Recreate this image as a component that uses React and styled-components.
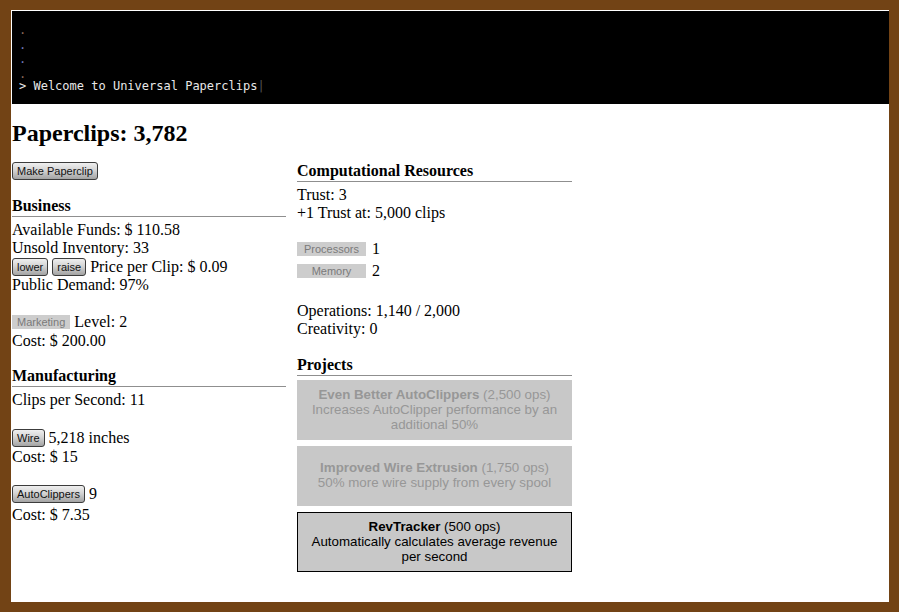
import styled, { createGlobalStyle } from 'styled-components';

const GlobalStyle = createGlobalStyle`
  html, body {
    margin: 0;
    padding: 0;
    background: #724315;
  }
  body {
    font-family: "Liberation Serif", "Times New Roman", serif;
    font-size: 16px;
    color: #000;
  }
`;

const Page = styled.div`
  padding: 10px 10px 10px 11px;
  height: 612px;
  box-sizing: border-box;
`;

const Panel = styled.div`
  background: #fff;
  width: 878px;
  height: 592px;
  box-sizing: border-box;
  padding-top: 1px;
`;

const Console = styled.div`
  margin-left: 1px;
  height: 93px;
  box-sizing: border-box;
  background: #000;
  padding: 12px 7px 0;
  font-family: "DejaVu Sans Mono", monospace;
  font-size: 12px;
  line-height: 14.5px;
  color: #e8e8e8;
`;

const ConsoleLine = styled.div`
  color: ${(p) => p.$dim || '#e8e8e8'};
  white-space: pre;
  margin-top: ${(p) => (p.$dim ? 0 : -2)}px;
`;

const Cursor = styled.span`
  color: #555;
`;

const Body = styled.div`
  padding-left: 1px;
`;

const Title = styled.h2`
  font-size: 24px;
  font-weight: bold;
  margin: 16px 0 0;
  line-height: 27px;
`;

const Columns = styled.div`
  display: flex;
  gap: 11px;
  margin-top: 15px;
`;

const Column = styled.div`
  width: ${(p) => p.$w || 274}px;
  display: flex;
  flex-direction: column;
`;

const ButtonRow = styled.div`
  display: flex;
`;

const Heading = styled.div`
  font-weight: bold;
  line-height: 18px;
  border-bottom: 1px solid #8f8f8f;
  padding-bottom: 1px;
  margin: ${(p) => p.$mt || 0}px 0 4px;
`;

const Line = styled.div`
  line-height: 18px;
  min-height: ${(p) => p.$h || 18}px;
  margin-top: ${(p) => p.$mt || 0}px;
  display: flex;
  align-items: center;
  gap: ${(p) => p.$gap || 4}px;
`;

const Gap = styled.div`
  height: ${(p) => p.$h || 18}px;
`;

const Button = styled.button`
  font-family: "Liberation Sans", Arial, sans-serif;
  font-size: 11px;
  line-height: 14px;
  padding: 1px 4px;
  margin: 0;
  color: #111;
  border: 1px solid #3c3c3c;
  border-radius: 3px;
  background: linear-gradient(#efefef, #d4d4d4 45%, #a3a3a3);
  cursor: pointer;
`;

const FlatButton = styled.button`
  font-family: "Liberation Sans", Arial, sans-serif;
  font-size: 11px;
  line-height: 14px;
  padding: 0 5px;
  margin: 0;
  width: ${(p) => (p.$w ? `${p.$w}px` : 'auto')};
  color: #7a7a7a;
  border: none;
  background: #cdcdcd;
`;

const Project = styled.div`
  height: 60px;
  box-sizing: border-box;
  margin-bottom: 6px;
  padding: 0 5px 2px;
  display: flex;
  flex-direction: column;
  justify-content: center;
  text-align: center;
  font-family: "Liberation Sans", Arial, sans-serif;
  font-size: 13.33px;
  line-height: 15px;
  background: #c8c8c8;
  color: ${(p) => (p.$active ? '#000' : '#979797')};
  border: 1px solid ${(p) => (p.$active ? '#000' : '#c8c8c8')};
`;

const projects = [
  { name: 'Even Better AutoClippers', cost: '2,500', text: 'Increases AutoClipper performance by an additional 50%' },
  { name: 'Improved Wire Extrusion', cost: '1,750', text: '50% more wire supply from every spool' },
  { name: 'RevTracker', cost: '500', text: 'Automatically calculates average revenue per second', active: true },
];

export default function App() {
  return (
    <Page>
      <GlobalStyle />
      <Panel>
        <Console>
          <ConsoleLine $dim="#8a6a5a">.</ConsoleLine>
          <ConsoleLine $dim="#6f78b8">.</ConsoleLine>
          <ConsoleLine $dim="#6f78b8">.</ConsoleLine>
          <ConsoleLine $dim="#8a6a5a">.</ConsoleLine>
          <ConsoleLine>
            {'> Welcome to Universal Paperclips'}
            <Cursor>|</Cursor>
          </ConsoleLine>
        </Console>
        <Body>
          <Title>Paperclips: 3,782</Title>
          <Columns>
            <Column>
              <ButtonRow>
                <Button>Make Paperclip</Button>
              </ButtonRow>
              <Heading $mt={17}>Business</Heading>
              <Line>Available Funds: $ 110.58</Line>
              <Line>Unsold Inventory: 33</Line>
              <Line $h={19}>
                <Button>lower</Button>
                <Button>raise</Button>
                <span>Price per Clip: $ 0.09</span>
              </Line>
              <Line>Public Demand: 97%</Line>
              <Gap />
              <Line $h={20}>
                <FlatButton>Marketing</FlatButton>
                <span>Level: 2</span>
              </Line>
              <Line>Cost: $ 200.00</Line>
              <Heading $mt={17}>Manufacturing</Heading>
              <Line>Clips per Second: 11</Line>
              <Gap />
              <Line $h={21}>
                <Button>Wire</Button>
                <span>5,218 inches</span>
              </Line>
              <Line>Cost: $ 15</Line>
              <Gap />
              <Line $h={20}>
                <Button>AutoClippers</Button>
                <span>9</span>
              </Line>
              <Line $mt={2}>Cost: $ 7.35</Line>
            </Column>
            <Column $w={275}>
              <Heading>Computational Resources</Heading>
              <Line>Trust: 3</Line>
              <Line>+1 Trust at: 5,000 clips</Line>
              <Gap $h={18} />
              <Line $gap={6}>
                <FlatButton $w={69}>Processors</FlatButton>
                <span>1</span>
              </Line>
              <Line $gap={6} $mt={4}>
                <FlatButton $w={69}>Memory</FlatButton>
                <span>2</span>
              </Line>
              <Gap $h={22} />
              <Line>Operations: 1,140 / 2,000</Line>
              <Line>Creativity: 0</Line>
              <Heading $mt={18}>Projects</Heading>
              {projects.map((p) => (
                <Project key={p.name} $active={p.active}>
                  <div>
                    <b>{p.name}</b> ({p.cost} ops)
                  </div>
                  <div>{p.text}</div>
                </Project>
              ))}
            </Column>
          </Columns>
        </Body>
      </Panel>
    </Page>
  );
}
